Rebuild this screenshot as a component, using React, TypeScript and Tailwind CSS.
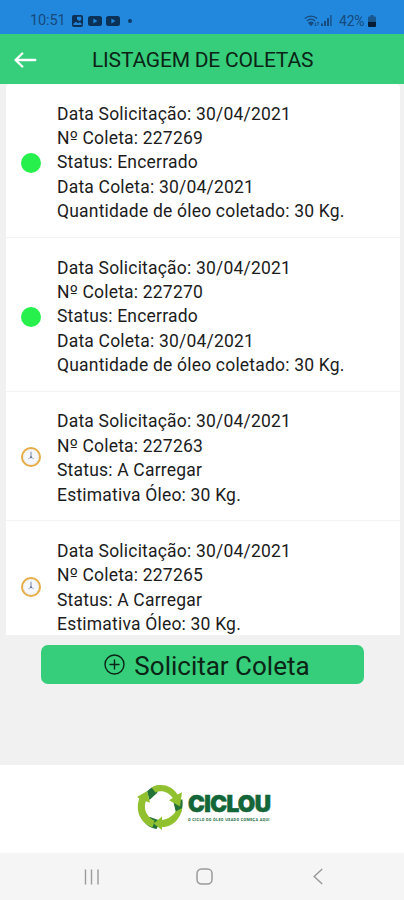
import React from "react";

type Coleta = { status: "done" | "pending"; numero: string; before: string; after: string[] };

const coletas: Coleta[] = [
  {
    status: "done",
    numero: "227269",
    before: "Data Solicitação: 30/04/2021",
    after: ["Status: Encerrado", "Data Coleta: 30/04/2021", "Quantidade de óleo coletado: 30 Kg."],
  },
  {
    status: "done",
    numero: "227270",
    before: "Data Solicitação: 30/04/2021",
    after: ["Status: Encerrado", "Data Coleta: 30/04/2021", "Quantidade de óleo coletado: 30 Kg."],
  },
  {
    status: "pending",
    numero: "227263",
    before: "Data Solicitação: 30/04/2021",
    after: ["Status: A Carregar", "Estimativa Óleo: 30 Kg."],
  },
  {
    status: "pending",
    numero: "227265",
    before: "Data Solicitação: 30/04/2021",
    after: ["Status: A Carregar", "Estimativa Óleo: 30 Kg."],
  },
];

function StatusIcon({ status }: { status: Coleta["status"] }) {
  if (status === "done") {
    return <span className="block size-5 shrink-0 rounded-full bg-[#27f04c]" />;
  }
  return (
    <svg className="-mt-[2px] size-5 shrink-0" viewBox="0 0 20 20" fill="none">
      <circle cx="10" cy="10" r="9" fill="#f6f7fc" stroke="#e5ad46" strokeWidth="2" />
      <circle cx="10" cy="10" r="7.2" stroke="#d8d5d6" strokeWidth="0.8" strokeDasharray="1 2.77" />
      <path d="M10 4.8V10.4" stroke="#8190b0" strokeWidth="1.1" />
      <path d="M7.2 12L10 10.2L12.8 11.8" stroke="#a3adc5" strokeWidth="1" />
      <circle cx="10" cy="10.2" r="1" fill="#62718f" />
    </svg>
  );
}

function VideoIcon() {
  return (
    <svg className="h-[10px] w-[14px]" viewBox="0 0 14 10">
      <rect width="14" height="10" rx="2.5" fill="#0c3157" />
      <path d="M5.4 2.6L9.4 5L5.4 7.4Z" fill="#2087dc" />
    </svg>
  );
}

function StatusBar() {
  return (
    <div className="flex h-[34px] items-center justify-between bg-[#2288dd] pt-[7px] pl-[30px] pr-[28px] text-[14px] leading-none text-[#164a7c]">
      <div className="flex items-center">
        <span className="w-[42px] pt-px text-[14.5px] tracking-[-0.1px]">10:51</span>
        <svg className="h-[12px] w-[11px]" viewBox="0 0 11 12">
          <rect width="11" height="12" rx="2" fill="#0c3157" />
          <path d="M1.5 8.5L4 6.8L6 8.3L8 7.3L9.5 8.5V10H1.5Z" fill="#2087dc" />
          <path d="M5 1.8H9.2V5L7.5 6L5 4.5Z" fill="#2087dc" />
        </svg>
        <span className="ml-[5px] flex gap-1">
          <VideoIcon />
          <VideoIcon />
        </span>
        <span className="ml-[8px] size-[4px] rounded-full bg-[#0f3a66]" />
      </div>
      <div className="flex items-center">
        <svg className="h-[12px] w-[16px]" viewBox="0 0 16 12" fill="none" stroke="#174b7e" strokeWidth="1.3">
          <path d="M0.8 3.6C4.4 0.3 9.6 0.3 13.2 3.6" />
          <path d="M2.9 5.9C5.4 3.7 8.6 3.7 11.1 5.9" />
          <path d="M5 8.1C6.2 7 7.8 7 9 8.1L7 10.2Z" fill="#174b7e" />
          <path d="M11.5 7.5V11M14 7V10.5M10.4 9.8L11.5 11L12.6 9.8M12.9 8.2L14 7L15.1 8.2" strokeWidth="0.8" />
        </svg>
        <svg className="ml-[1px] h-[11px] w-[11px]" viewBox="0 0 11 11" fill="#174b7e">
          <rect x="0" y="8.5" width="2" height="2.5" />
          <rect x="3" y="6" width="2" height="5" />
          <rect x="6" y="3.2" width="2" height="7.8" />
          <rect x="9" y="0" width="1.8" height="11" opacity="0.7" />
        </svg>
        <span className="ml-[7px] w-[29px] pt-px text-[14px] tracking-[-0.2px]">42%</span>
        <svg className="h-[12px] w-[8px]" viewBox="0 0 8 12">
          <path d="M2.5 0H5.5V1.4H7Q8 1.4 8 2.4V6H0V2.4Q0 1.4 1 1.4H2.5Z" fill="#19578f" />
          <path d="M0 6.5H8V11Q8 12 7 12H1Q0 12 0 11Z" fill="#071d35" />
        </svg>
      </div>
    </div>
  );
}

function Logo() {
  return (
    <div className="flex items-center">
      <svg className="mb-[2px] size-[46px] shrink-0" viewBox="0 0 46 46">
        <path d="M10 7.5C13 4 18 1.4 23 1.2L20 9L12.5 16Z" fill="#237238" />
        <path d="M36 16L45.4 15.5C46 20 45.6 24 44 28L39 29Z" fill="#237238" />
        <path d="M4.5 34L13 33L24 37L19.5 45C13 44 7.5 40 4.5 34Z" fill="#237238" />
        <path d="M14.5 3.5C24 -1.5 35 1.5 40.5 10.5L45 8.3L43 22.5L32 16.2L35.8 14C31.5 7.5 24 5.5 18.5 8.5Z" fill="#92c12f" />
        <path d="M45.3 24C44 35 35 43 25 43.3V46L16.5 39.5L25 32.5V36C32 35 37 30.5 38.6 27.5Z" fill="#92c12f" />
        <path d="M15.5 43.6C3 38.5 -2 27 2.3 14.6L0 13L10.2 7L13 18.8L8.7 17.3C6.3 25.5 9.5 32.5 17.5 36.7Z" fill="#92c12f" />
      </svg>
      <div className="ml-[5px] flex w-[84px] flex-col items-start">
        <span className="-mt-[4px] whitespace-nowrap font-['Inter'] text-[22.5px] font-black leading-[27px] tracking-[-0.6px] text-[#126638] [-webkit-text-stroke:0.6px_#126638]">CICLOU</span>
        <span className="whitespace-nowrap font-['Roboto'] text-[3.8px] font-bold leading-[5px] tracking-[0.35px] text-[#176b3e]">O CICLO DO ÓLEO USADO COMEÇA AQUI</span>
      </div>
    </div>
  );
}

export default function App() {
  return (
    <div className="flex h-[900px] w-[404px] flex-col overflow-hidden bg-[#f1f1f1] font-['Roboto',sans-serif] text-[#1c1c1c]">
      <StatusBar />
      <header className="flex h-[50px] items-center bg-[#36cd7b] pt-px pl-[14px]">
        <svg className="h-[16px] w-[23px]" viewBox="0 0 23 16" fill="none" stroke="#fff" strokeWidth="2.3" strokeLinecap="round" strokeLinejoin="round">
          <path d="M21.3 8H1.5M8.3 1.5L1.5 8L8.3 14.5" />
        </svg>
        <h1 className="ml-[55px] whitespace-nowrap pt-px text-[21px] leading-none tracking-[-0.2px] text-[#0b2415]">LISTAGEM DE COLETAS</h1>
      </header>
      <main className="mr-[4px] ml-[6px] h-[551px] overflow-hidden rounded-t-[4px] bg-white">
        {coletas.map((c) => (
          <article key={c.numero} className="flex items-center border-b border-[#f3f3f3] pt-[17.6px] pb-[13.3px] pl-[15px]">
            <StatusIcon status={c.status} />
            <div className="ml-[16px] whitespace-nowrap text-[17.5px] leading-[24.4px] tracking-[0.2px]">
              <p>{c.before}</p>
              <p className="h-[24.4px]">
                N<span className="font-['DejaVu_Sans'] text-[17px] leading-none">º</span> Coleta: {c.numero}
              </p>
              {c.after.map((line) => (
                <p key={line}>{line}</p>
              ))}
            </div>
          </article>
        ))}
      </main>
      <button className="mt-[10px] ml-[41px] flex h-[39px] w-[323px] items-center justify-center rounded-[7px] bg-[#36cd7b] pl-[9px] text-[#0b2415]">
        <svg className="size-[21px]" viewBox="0 0 21 21" fill="none" stroke="#0b2415" strokeWidth="1.4" strokeLinecap="round">
          <circle cx="10.5" cy="10.5" r="9.5" />
          <path d="M10.5 6V15M6 10.5H15" />
        </svg>
        <span className="ml-[9px] whitespace-nowrap pt-[3px] text-[26px] leading-none">Solicitar Coleta</span>
      </button>
      <footer className="mt-auto flex h-[88px] items-center bg-white pb-[2px] pl-[137px]">
        <Logo />
      </footer>
      <nav className="flex h-[47px] shrink-0 items-center bg-[#f5f5f5] pl-[84px]">
        <svg className="h-[16px] w-[16px]" viewBox="0 0 16 16" stroke="#9b9b9b" strokeWidth="1.4">
          <path d="M1.5 0.5V15.5M7.5 0.5V15.5M14 0.5V15.5" />
        </svg>
        <svg className="ml-[96px] size-[17px]" viewBox="0 0 17 17" fill="none" stroke="#9b9b9b" strokeWidth="1.5">
          <rect x="1" y="1" width="15" height="15" rx="4.5" />
        </svg>
        <svg className="ml-[100px] h-[17px] w-[10px]" viewBox="0 0 10 17" fill="none" stroke="#9b9b9b" strokeWidth="1.5">
          <path d="M9.2 1L1.2 8.5L9.2 16" />
        </svg>
      </nav>
    </div>
  );
}
